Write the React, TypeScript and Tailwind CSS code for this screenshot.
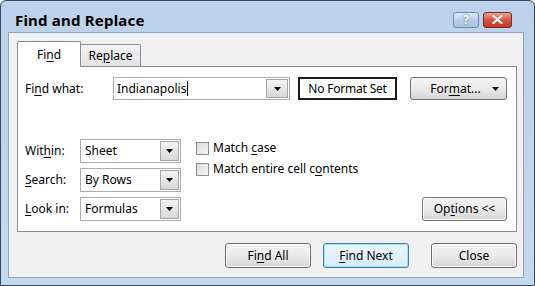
import React from "react";

const font = { fontFamily: '"Noto Sans", "Open Sans", sans-serif' };

function U({ children }: { children: React.ReactNode }) {
  return <span className="underline underline-offset-2 decoration-1">{children}</span>;
}

function Arrow() {
  return (
    <svg width="7" height="4" viewBox="0 0 7 4">
      <path d="M0 0 H7 L3.5 4 Z" fill="#000" />
    </svg>
  );
}

function Combo({ value, width }: { value: React.ReactNode; width: string }) {
  return (
    <div className={`flex h-[24px] ${width} border border-[#abadb3] bg-white`}>
      <div className="flex-1 flex items-center pl-[4px] text-[12px] text-black">{value}</div>
      <div className="w-[19px] m-[1px] flex items-center justify-center border border-[#a6a6a6] bg-gradient-to-b from-[#f4f4f4] to-[#d8d8d8]">
        <Arrow />
      </div>
    </div>
  );
}

function Btn({ children, w, primary }: { children: React.ReactNode; w: string; primary?: boolean }) {
  return (
    <div
      className={`flex items-center justify-center ${w} rounded-[3px] border text-[12px] text-black ${
        primary
          ? "border-[#3c7fb1] bg-gradient-to-b from-[#eaf6fd] to-[#d7eefb] shadow-[inset_0_0_0_1px_#a8dcf4]"
          : "border-[#707070] bg-gradient-to-b from-[#f2f2f2] via-[#ebebeb] to-[#d5d5d5] shadow-[inset_0_0_0_1px_#fcfcfc]"
      }`}
    >
      {children}
    </div>
  );
}

function Check({ children }: { children: React.ReactNode }) {
  return (
    <div className="flex items-center gap-[4px] h-[16px]">
      <div className="w-[13px] h-[13px] border border-[#8e8f8f] bg-gradient-to-br from-[#dcdcdc] to-[#f6f6f6]" />
      <span className="text-[12px] text-black">{children}</span>
    </div>
  );
}

export default function App() {
  return (
    <div
      style={font}
      className="w-[535px] h-[286px] flex flex-col bg-gradient-to-b from-[#bcd2ea] to-[#c4d8ee] border border-[#3a4a5a] rounded-t-[6px] overflow-hidden"
    >
      {/* Title bar */}
      <div className="h-[31px] flex items-center pl-[14px] pr-[22px] shrink-0">
        <div className="flex-1 text-[15px] font-bold text-black pt-[7px] tracking-[0.2px]">Find and Replace</div>
        <div className="flex items-center gap-[4px] mt-[6px]">
          <div className="w-[26px] h-[16px] rounded-[3px] border border-[#6d8db3] bg-gradient-to-b from-[#e2ecf7] via-[#b9cfe6] to-[#a7c1df] flex items-center justify-center text-[12px] font-bold text-white leading-none [text-shadow:0_0_2px_#34507a]">
            ?
          </div>
          <div className="w-[29px] h-[16px] rounded-[3px] border border-[#7a2a22] bg-gradient-to-b from-[#e8a493] via-[#d2533d] to-[#c1392a] flex items-center justify-center">
            <svg width="11" height="9" viewBox="0 0 11 9">
              <path d="M1.5 1 L9.5 8 M9.5 1 L1.5 8" stroke="#fff" strokeWidth="2.2" strokeLinecap="round" />
            </svg>
          </div>
        </div>
      </div>

      {/* Content */}
      <div className="flex-1 ml-[7px] mr-[10px] mb-[7px] bg-[#f0f0f0] border border-[#8ea4c0] flex flex-col pl-[8px] pt-[8px]">
        {/* Tabs */}
        <div className="flex items-end h-[25px]">
          <div className="relative z-10 w-[64px] h-[26px] -mb-[1px] bg-white border border-[#898c95] border-b-0 rounded-t-[2px] flex items-center justify-center text-[12px] text-black">
            Fi<U>n</U>d
          </div>
          <div className="w-[60px] h-[22px] bg-gradient-to-b from-[#f3f3f3] to-[#e3e3e3] border border-[#898c95] border-l-0 border-b-0 rounded-tr-[2px] flex items-center justify-center text-[12px] text-black">
            Re<U>p</U>lace
          </div>
        </div>

        {/* Panel */}
        <div className="w-[500px] h-[166px] bg-white border border-[#898c95] flex flex-col pl-[7px] pr-[9px] pt-[10px] pb-[10px]">
          <div className="flex items-center h-[23px]">
            <div className="w-[88px] text-[12px] text-black">
              Fi<U>n</U>d what:
            </div>
            <div className="flex h-[23px] w-[177px] border border-[#abadb3] bg-white">
              <div className="flex-1 flex items-center pl-[3px] text-[12px] text-black">
                Indianapolis<span className="inline-block w-[1px] h-[15px] bg-black ml-[1px]" />
              </div>
              <div className="w-[22px] m-[1px] flex items-center justify-center border border-[#a6a6a6] bg-gradient-to-b from-[#f4f4f4] to-[#d8d8d8]">
                <Arrow />
              </div>
            </div>
            <div className="ml-[8px] w-[99px] h-[23px] border-2 border-[#1a1a1a] flex items-center justify-center text-[12px] text-black tracking-[-0.2px]">
              No Format Set
            </div>
            <div className="ml-[13px] w-[97px] h-[23px] rounded-[3px] border border-[#707070] bg-gradient-to-b from-[#f2f2f2] via-[#ebebeb] to-[#d5d5d5] flex items-center text-[12px] text-black">
              <span className="flex-1 text-center pl-[8px]">
                For<U>m</U>at...
              </span>
              <span className="pr-[7px] flex">
                <Arrow />
              </span>
            </div>
          </div>

          <div className="flex-1" />

          <div className="flex items-end">
            <div className="grid grid-cols-[55px_101px] gap-y-[5px] items-center">
              <div className="text-[12px] text-black">
                Wit<U>h</U>in:
              </div>
              <Combo value="Sheet" width="w-[101px]" />
              <div className="text-[12px] text-black">
                <U>S</U>earch:
              </div>
              <Combo value="By Rows" width="w-[101px]" />
              <div className="text-[12px] text-black">
                <U>L</U>ook in:
              </div>
              <Combo value="Formulas" width="w-[101px]" />
            </div>
            <div className="self-start flex flex-col gap-[5px] ml-[15px] pt-[1px]">
              <Check>
                Match <U>c</U>ase
              </Check>
              <Check>
                Match entire cell c<U>o</U>ntents
              </Check>
            </div>
            <div className="flex-1 flex justify-end">
              <Btn w="w-[85px] h-[24px]">
                Op<U>t</U>ions &lt;&lt;
              </Btn>
            </div>
          </div>
        </div>

        {/* Bottom buttons */}
        <div className="w-[500px] flex justify-end mt-[11px]">
          <Btn w="w-[86px] h-[25px]">
            Fi<U>n</U>d All
          </Btn>
          <div className="w-[12px]" />
          <Btn w="w-[86px] h-[25px]" primary>
            <U>F</U>ind Next
          </Btn>
          <div className="w-[22px]" />
          <Btn w="w-[86px] h-[25px]">Close</Btn>
        </div>
      </div>
    </div>
  );
}
